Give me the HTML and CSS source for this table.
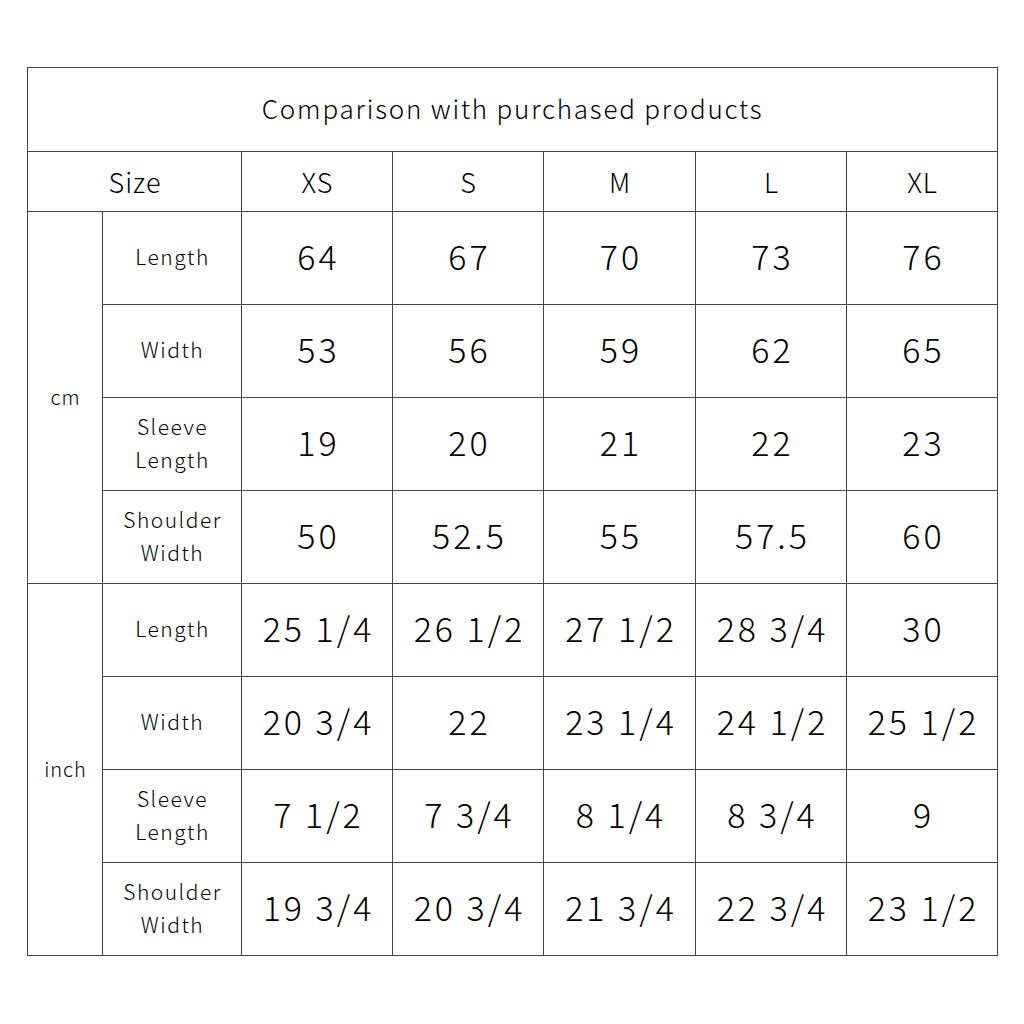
FILE: index.html
```html
<!DOCTYPE html>
<html>
<head>
<meta charset="utf-8">
<link rel="stylesheet" href="styles.css">
</head>
<body>
<div class="page">
<table class="chart">
  <colgroup>
    <col class="c-unit"><col class="c-label"><col class="c-v"><col class="c-v"><col class="c-v3"><col class="c-v"><col class="c-v">
  </colgroup>
  <tr class="title-row"><td colspan="7" class="title">Comparison with purchased products</td></tr>
  <tr class="head-row"><td colspan="2" class="head">Size</td><td class="head">XS</td><td class="head">S</td><td class="head">M</td><td class="head">L</td><td class="head">XL</td></tr>
  <tr class="data"><td rowspan="4" class="unit">cm</td><td class="label">Length</td><td class="val">64</td><td class="val">67</td><td class="val">70</td><td class="val">73</td><td class="val">76</td></tr>
  <tr class="data"><td class="label">Width</td><td class="val">53</td><td class="val">56</td><td class="val">59</td><td class="val">62</td><td class="val">65</td></tr>
  <tr class="data"><td class="label">Sleeve<br>Length</td><td class="val">19</td><td class="val">20</td><td class="val">21</td><td class="val">22</td><td class="val">23</td></tr>
  <tr class="data"><td class="label">Shoulder<br>Width</td><td class="val">50</td><td class="val">52.5</td><td class="val">55</td><td class="val">57.5</td><td class="val">60</td></tr>
  <tr class="data"><td rowspan="4" class="unit">inch</td><td class="label">Length</td><td class="val">25 1/4</td><td class="val">26 1/2</td><td class="val">27 1/2</td><td class="val">28 3/4</td><td class="val">30</td></tr>
  <tr class="data"><td class="label">Width</td><td class="val">20 3/4</td><td class="val">22</td><td class="val">23 1/4</td><td class="val">24 1/2</td><td class="val">25 1/2</td></tr>
  <tr class="data"><td class="label">Sleeve<br>Length</td><td class="val">7 1/2</td><td class="val">7 3/4</td><td class="val">8 1/4</td><td class="val">8 3/4</td><td class="val">9</td></tr>
  <tr class="data"><td class="label">Shoulder<br>Width</td><td class="val">19 3/4</td><td class="val">20 3/4</td><td class="val">21 3/4</td><td class="val">22 3/4</td><td class="val">23 1/2</td></tr>
</table>
</div>
</body>
</html>
```
FILE: styles.css
```css
html, body {
  margin: 0;
  padding: 0;
  background: #ffffff;
}
.page {
  padding: 67px 0 0 27px;
}
.chart {
  border-collapse: collapse;
  table-layout: fixed;
  width: 971px;
  border: 1px solid #9a9a9a;
  font-family: "Noto Sans CJK JP", "Noto Sans", sans-serif;
  font-weight: 300;
  color: #000;
}
.c-unit { width: 75px; }
.c-label { width: 139px; }
.c-v { width: 151px; }
.c-v3 { width: 152px; }
.chart td {
  border: 1px solid #444;
  text-align: center;
  vertical-align: middle;
  padding: 0;
  line-height: 1.25;
}
.chart .title-row td { height: 80px; padding-bottom: 3px; }
.chart .head-row td { height: 59px; }
.chart .data td { height: 89px; padding-bottom: 3px; }
.chart .title {
  font-size: 26px;
  letter-spacing: 1.8px;
}
.chart .head {
  font-size: 27px;
  letter-spacing: 1px;
  padding-left: 1px;
}
.chart .unit {
  font-size: 20px;
  letter-spacing: 1px;
  padding-left: 1px;
}
.chart .label {
  font-size: 21px;
  letter-spacing: 1.5px;
  line-height: 33px;
  padding-left: 1px;
}
.chart .val {
  font-size: 34px;
  letter-spacing: 3px;
  padding-left: 3px;
}
```
